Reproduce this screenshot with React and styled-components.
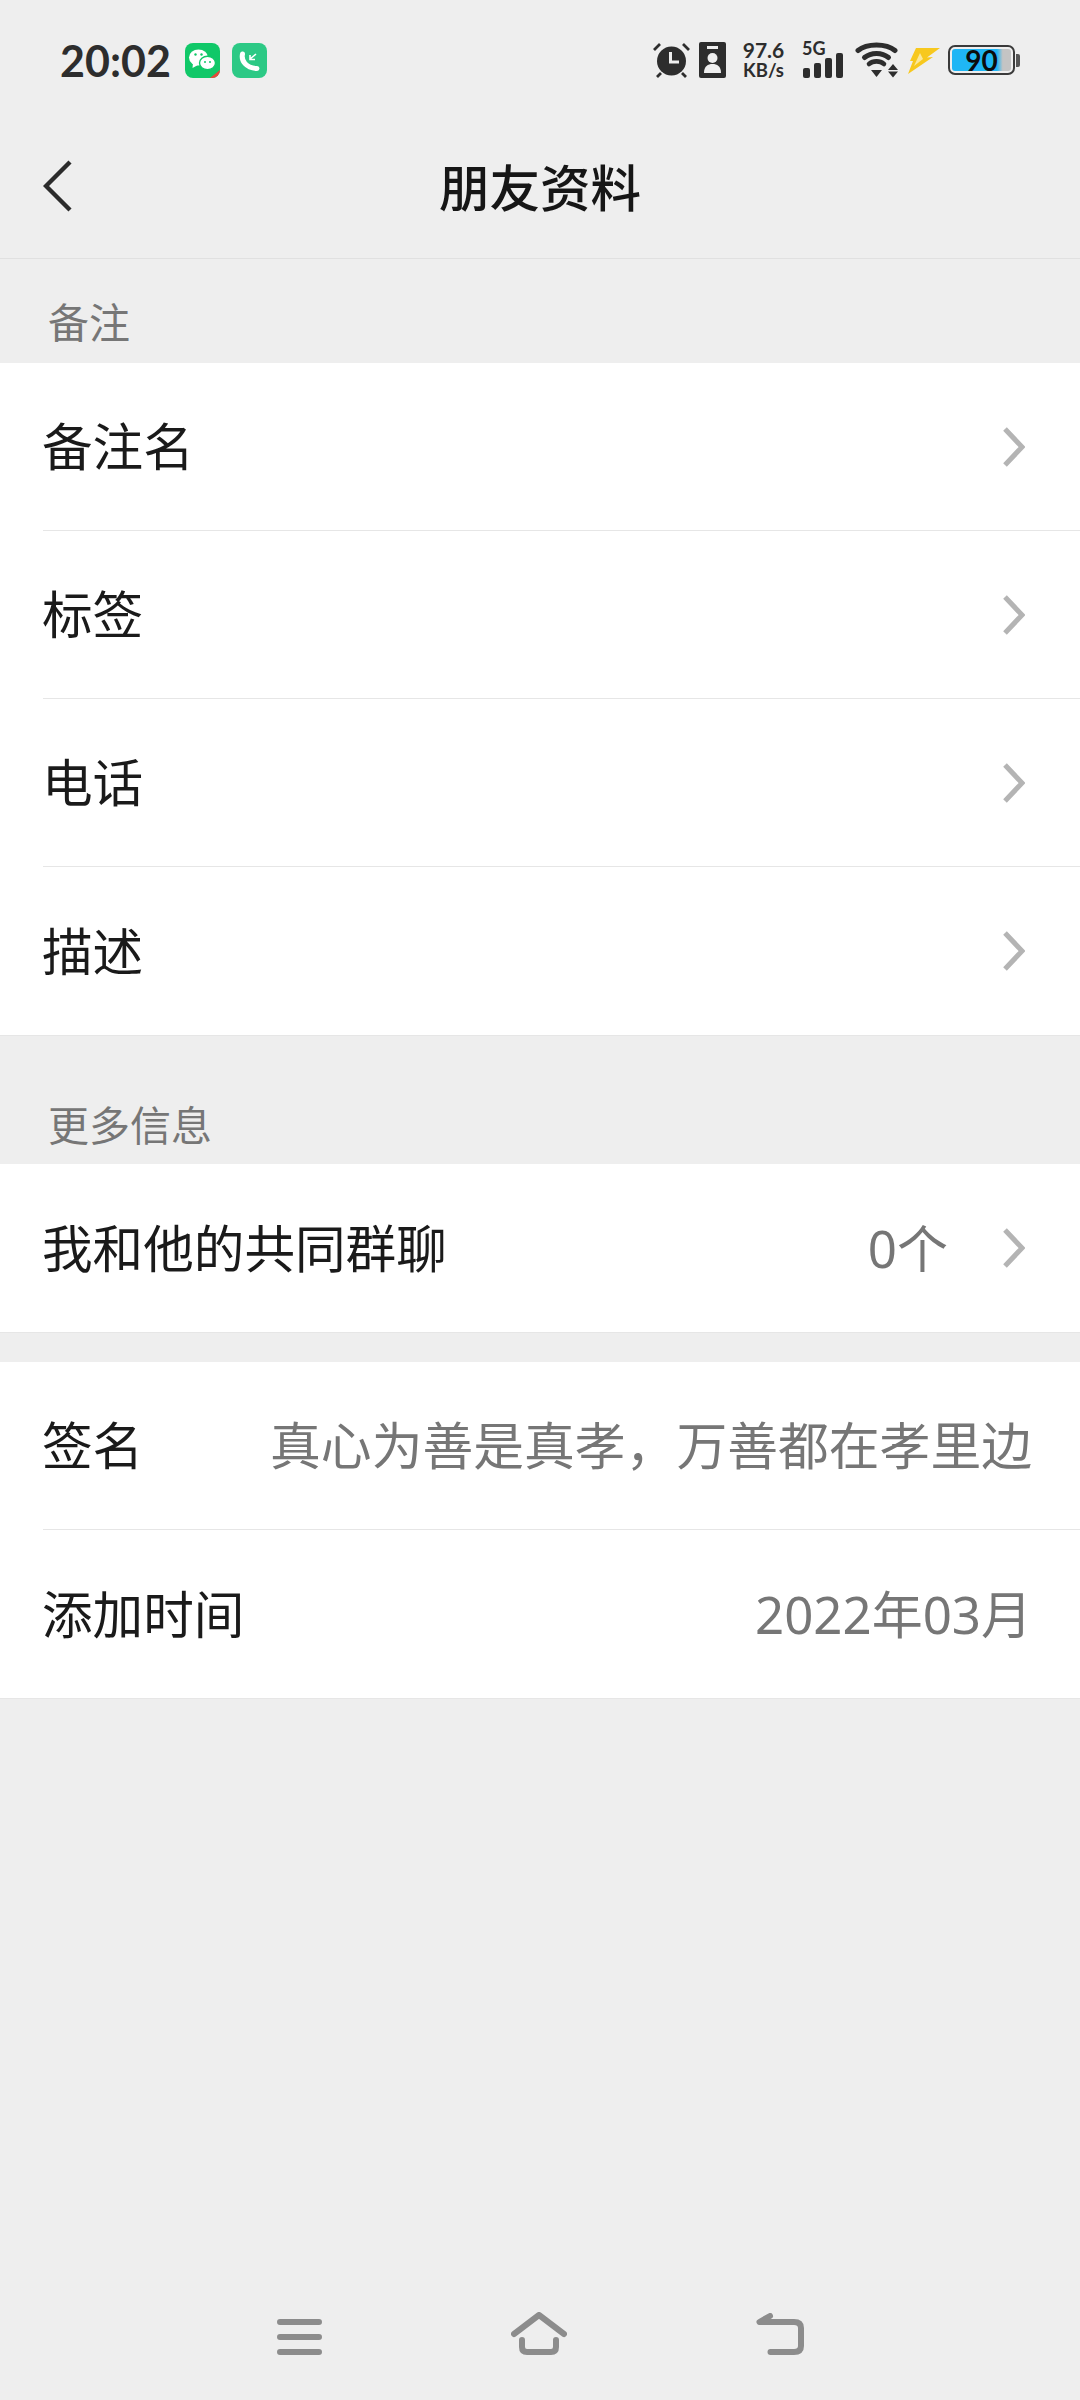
import React from 'react';
import styled, { createGlobalStyle } from 'styled-components';

const GlobalStyle = createGlobalStyle`
  html, body {
    margin: 0;
    padding: 0;
    background: #eeeeee;
  }
  * {
    box-sizing: border-box;
  }
`;

const FONT = `"Noto Sans", "Noto Sans CJK SC", sans-serif`;

const Chevron = () => (
  <ChevronSvg viewBox="0 0 22 40" fill="none" stroke="#b4b4b4" strokeWidth="5">
    <path d="M2 2 L19 20 L2 38" />
  </ChevronSvg>
);

const Row = ({ label, value, arrow, last, wide }) => (
  <RowItem>
    <RowInner $last={last}>
      <RowLabel>{label}</RowLabel>
      {value && <RowValue $arrow={arrow} $wide={wide}>{value}</RowValue>}
      {arrow && <Chevron />}
    </RowInner>
  </RowItem>
);

const StatusBar = () => (
  <Status>
    <StatusLeft>
      <Time>20:02</Time>
      <AppIcon $bg="#10c868">
        <svg width="35" height="35" viewBox="0 0 35 35">
          <ellipse cx="13.5" cy="14.5" rx="9.5" ry="8" fill="#fff" />
          <path d="M8 20 L7.5 25 L13 22Z" fill="#fff" />
          <ellipse cx="22.5" cy="20" rx="8" ry="6.8" fill="#fff" stroke="#10c868" strokeWidth="1.4" />
          <circle cx="10.5" cy="11.5" r="1.2" fill="#10c868" />
          <circle cx="16.5" cy="11.5" r="1.2" fill="#10c868" />
          <circle cx="20" cy="19" r="1" fill="#10c868" />
          <circle cx="25" cy="19" r="1" fill="#10c868" />
          <path d="M25 35 L35 27 L35 31 Q35 35 31 35Z" fill="#e8463a" />
        </svg>
      </AppIcon>
      <AppIcon $bg="#2cc985">
        <svg width="35" height="35" viewBox="0 0 35 35" fill="none">
          <path d="M10.5 11 C9 18 14 25 25 25.5" stroke="#fff" strokeWidth="5" strokeLinecap="round" />
          <path d="M18 16 L24 11 M18 12 V16.5 H23" stroke="#fff" strokeWidth="1.6" />
        </svg>
      </AppIcon>
    </StatusLeft>
    <StatusRight>
      <Glyph width="37" height="36" viewBox="0 0 37 36">
        <circle cx="18.5" cy="19" r="14.5" fill="#2d2d2d" />
        <path d="M17.5 10 V20 H26" stroke="#eee" strokeWidth="3" fill="none" />
        <path d="M1 8 L7 2 M36 8 L30 2 M4 35 L8 31 M33 35 L29 31" stroke="#2d2d2d" strokeWidth="2.8" />
      </Glyph>
      <Glyph $gap={9} width="27" height="36" viewBox="0 0 27 36">
        <rect width="27" height="36" rx="2" fill="#2d2d2d" />
        <rect x="8" y="4" width="11" height="3" fill="#eee" />
        <circle cx="13.5" cy="16" r="5" fill="#eee" />
        <path d="M5 31 C5 24 9 22 13.5 22 C18 22 22 24 22 31Z" fill="#eee" />
      </Glyph>
      <Speed>
        <span>97.6</span>
        <small>KB/s</small>
      </Speed>
      <Signal>
        <SignalText>5G</SignalText>
        <Bars>
          <Bar $h={10} />
          <Bar $h={15} />
          <Bar $h={20} />
          <Bar $h={25} />
        </Bars>
      </Signal>
      <Glyph $gap={12} width="43" height="36" viewBox="0 0 43 36" fill="none" stroke="#2d2d2d" strokeLinecap="round">
        <path d="M3 8.5 C12 1 31 1 40 8.5" strokeWidth="5" />
        <path d="M9.5 15.5 C16 10 27 10 33.5 15.5" strokeWidth="5" />
        <path d="M14 22 C18 18.5 25 18.5 29 22" strokeWidth="4.6" />
        <path d="M16 28 H27 L21.5 35Z" fill="#2d2d2d" stroke="none" />
        <path d="M33 28 L38 22 L43 28Z M33 29.5 H43 L38 35.5Z" fill="#2d2d2d" stroke="none" />
      </Glyph>
      <Glyph $gap={10} width="32" height="27" viewBox="0 0 32 27">
        <path d="M8 1 H32 L19 10.5 L25 10 L0 27 L5 14 L2 14Z" fill="#f7c81e" />
        <path d="M12 6 L6 19 L15 12Z" fill="#fbe89a" />
      </Glyph>
      <Battery>
        <BatteryBody>
          <BatteryFill />
          <BatteryText>90</BatteryText>
        </BatteryBody>
        <BatteryCap />
      </Battery>
    </StatusRight>
  </Status>
);

export default function App() {
  return (
    <Screen>
      <GlobalStyle />
      <StatusBar />
      <NavBar>
        <BackIcon viewBox="0 0 30 52" fill="none" stroke="#2b2b2b" strokeWidth="4.4">
          <path d="M27 2 L3 26 L27 50" />
        </BackIcon>
        <Title>朋友资料</Title>
      </NavBar>

      <SectionTitle>备注</SectionTitle>
      <Group>
        <Row label="备注名" arrow />
        <Row label="标签" arrow />
        <Row label="电话" arrow />
        <Row label="描述" arrow last />
      </Group>

      <SectionTitle $more>更多信息</SectionTitle>
      <Group>
        <Row label="我和他的共同群聊" value="0个" arrow last />
      </Group>

      <Group $top={30}>
        <Row label="签名" value="真心为善是真孝，万善都在孝里边" wide />
        <Row label="添加时间" value="2022年03月" last />
      </Group>

      <Spacer />

      <BottomNav>
        <svg width="45" height="36" viewBox="0 0 45 36" stroke="#8c8c8c" strokeWidth="6" strokeLinecap="round">
          <path d="M3 3 H42 M3 18 H42 M3 33 H42" />
        </svg>
        <svg width="56" height="43" viewBox="0 0 56 43" fill="none" stroke="#8c8c8c" strokeWidth="6" strokeLinecap="round" strokeLinejoin="round">
          <path d="M3 22 L28 3 L53 22" />
          <path d="M11 28 V35 Q11 40 16 40 H40 Q45 40 45 35 V28" />
        </svg>
        <svg width="48" height="42" viewBox="0 0 48 42" fill="none" stroke="#8c8c8c" strokeWidth="6" strokeLinecap="round" strokeLinejoin="round">
          <path d="M14 3 L3.5 9 H38 Q45 9 45 15 V33 Q45 39 38 39 H14.5" />
        </svg>
      </BottomNav>
    </Screen>
  );
}

const Screen = styled.div`
  width: 1080px;
  height: 2400px;
  background: #eeeeee;
  display: flex;
  flex-direction: column;
  overflow: hidden;
  font-family: ${FONT};
`;

const Status = styled.div`
  height: 120px;
  padding: 0 60px 0 60px;
  display: flex;
  align-items: center;
  justify-content: space-between;
`;

const StatusLeft = styled.div`
  display: flex;
  align-items: center;
`;

const Time = styled.span`
  font-family: Lato, sans-serif;
  font-size: 43px;
  font-weight: 700;
  color: #2d2d2d;
  margin-right: 14px;
`;

const AppIcon = styled.span`
  width: 35px;
  height: 35px;
  border-radius: 8px;
  background: ${(p) => p.$bg};
  margin-right: 12px;
  overflow: hidden;
  display: block;

  svg {
    display: block;
  }
`;

const StatusRight = styled.div`
  display: flex;
  align-items: center;
`;

const Glyph = styled.svg`
  display: block;
  margin-left: ${(p) => p.$gap || 0}px;
`;

const Speed = styled.div`
  width: 43px;
  margin-left: 16px;
  display: flex;
  flex-direction: column;
  align-items: center;
  color: #2d2d2d;
  font-family: Lato, sans-serif;
  font-weight: 700;
  line-height: 20px;
  font-size: 21px;
  white-space: nowrap;

  small {
    font-size: 18.5px;
  }
`;

const Signal = styled.div`
  margin-left: 17px;
  width: 41px;
  height: 36px;
  position: relative;
`;

const SignalText = styled.span`
  position: absolute;
  left: 0;
  top: -5px;
  font-family: Lato, sans-serif;
  font-weight: 700;
  font-size: 18px;
  color: #2d2d2d;
`;

const Bars = styled.div`
  position: absolute;
  right: 0;
  bottom: 0;
  display: flex;
  align-items: flex-end;
  gap: 4px;
`;

const Bar = styled.span`
  width: 7px;
  height: ${(p) => p.$h}px;
  background: #2d2d2d;
  border-radius: 2px;
`;

const Battery = styled.div`
  display: flex;
  align-items: center;
  margin-left: 8px;
`;

const BatteryBody = styled.div`
  width: 67px;
  height: 30px;
  border: 2px solid #3a3a3a;
  border-radius: 7px;
  padding: 2px;
  position: relative;
`;

const BatteryFill = styled.div`
  height: 100%;
  border-radius: 3px;
  background: linear-gradient(90deg, #1fb6f5 0 76%, #c4c4c4 86%);
`;

const BatteryText = styled.span`
  position: absolute;
  inset: 0;
  display: flex;
  align-items: center;
  justify-content: center;
  font-family: Lato, sans-serif;
  font-weight: 700;
  font-size: 28px;
  color: #0c0c0c;
`;

const BatteryCap = styled.span`
  width: 4px;
  height: 13px;
  margin-left: 1px;
  background: #555555;
  border-radius: 0 2px 2px 0;
`;

const NavBar = styled.div`
  height: 139px;
  border-bottom: 1px solid #e0e0e0;
  display: flex;
  align-items: center;
  justify-content: center;
  position: relative;
`;

const BackIcon = styled.svg`
  position: absolute;
  left: 43px;
  top: 40px;
  width: 30px;
  height: 52px;
`;

const Title = styled.h1`
  margin: 0 0 8px;
  font-size: 50.5px;
  font-weight: 500;
  color: #161616;
`;

const SectionTitle = styled.div`
  margin-top: ${(p) => (p.$more ? 45 : 0)}px;
  height: ${(p) => (p.$more ? 84 : 104)}px;
  padding: ${(p) => (p.$more ? 2 : 18)}px 0 0 48px;
  display: flex;
  align-items: center;
  font-size: 41px;
  color: #767676;
`;

const Group = styled.div`
  margin-top: ${(p) => p.$top || 0}px;
  background: #ffffff;
  box-shadow: 0 1px 0 #e6e6e6;
`;

const RowItem = styled.div`
  height: 168px;
  padding-left: 43px;
`;

const RowInner = styled.div`
  height: 100%;
  padding-right: 48px;
  display: flex;
  align-items: center;
  border-bottom: ${(p) => (p.$last ? 'none' : '1px solid #e6e6e6')};
`;

const RowLabel = styled.span`
  flex-shrink: 0;
  margin-left: -1px;
  padding-bottom: 5px;
  font-size: 50.6px;
  color: #1a1a1a;
`;

const RowValue = styled.span`
  margin-left: auto;
  margin-right: ${(p) => (p.$arrow ? '55px' : '0')};
  padding-bottom: 5px;
  font-size: ${(p) => (p.$wide ? '50.8px' : '51px')};
  color: #767676;
  white-space: nowrap;
`;

const ChevronSvg = styled.svg`
  width: 22px;
  height: 40px;
  margin-left: auto;
  margin-right: 7px;

  ${RowValue} + & {
    margin-left: 0;
  }
`;

const Spacer = styled.div`
  flex: 1;
`;

const BottomNav = styled.div`
  padding-bottom: 45px;
  display: flex;
  align-items: flex-end;
  justify-content: center;
  gap: 189px;
`;
